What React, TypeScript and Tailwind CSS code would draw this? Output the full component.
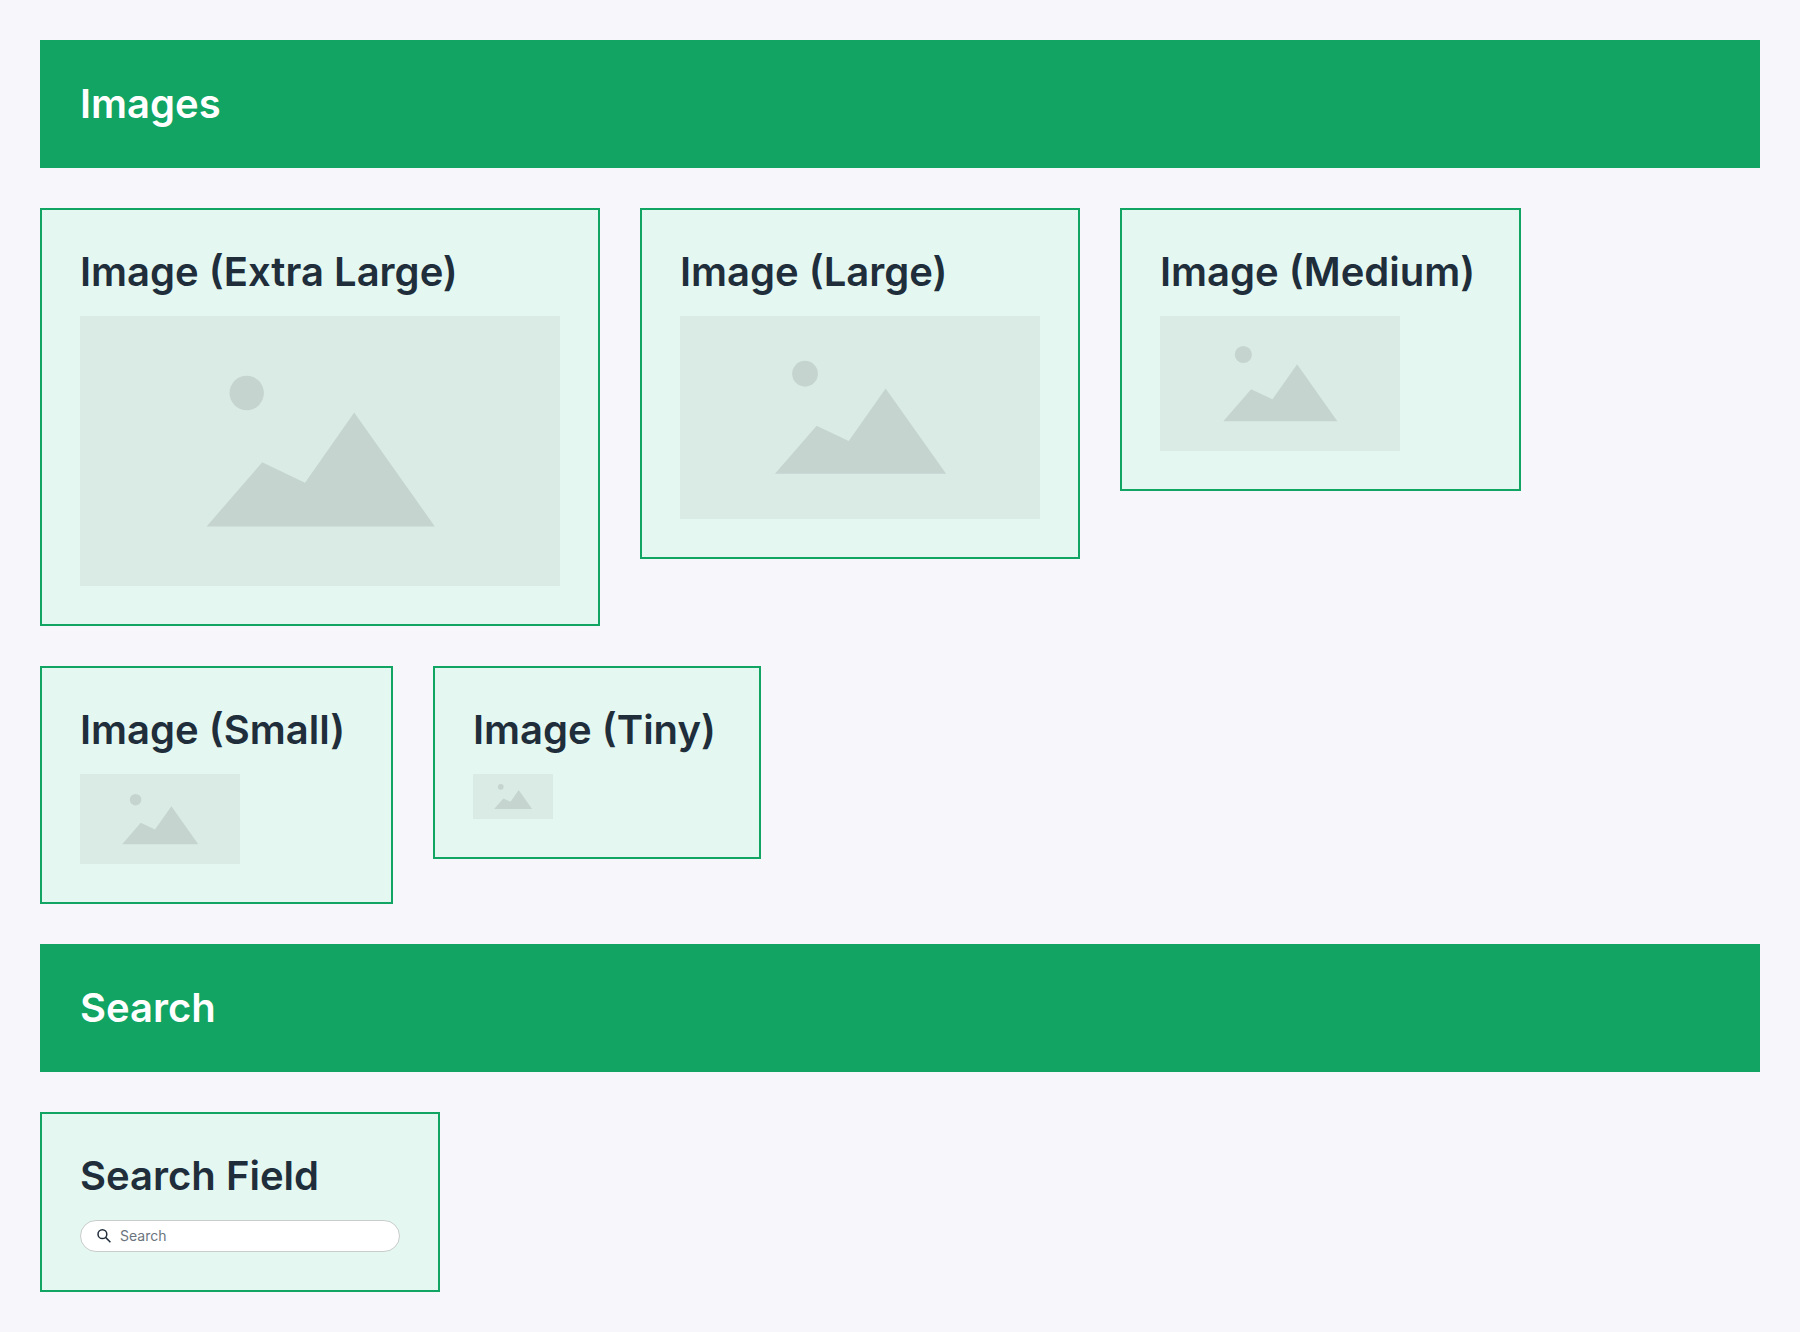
import type { ReactNode } from "react";

function Banner({ title }: { title: string }) {
  return (
    <header className="bg-[#11a462] p-10 text-white">
      <h2 className="text-[40px] leading-12 font-semibold">{title}</h2>
    </header>
  );
}

function Card({ title, width = "", children }: { title: string; width?: string; children: ReactNode }) {
  return (
    <article className={`flex flex-col gap-5 border-2 border-[#11a462] bg-[#e4f8f1] p-[38px] text-[#202d3a] ${width}`}>
      <h3 className="text-[40px] leading-12 font-semibold whitespace-nowrap">{title}</h3>
      {children}
    </article>
  );
}

function Placeholder({ width, label }: { width: string; label: string }) {
  return (
    <svg viewBox="0 0 480 270" role="img" aria-label={label} className={`block aspect-video bg-[#daebe5] ${width}`}>
      <g fill="#c5d4cf">
        <circle cx="166.7" cy="77" r="17.2" />
        <path d="M126.6 210.4 182.2 146.3 225 166.7 274.2 96.6 354.8 210.4Z" />
      </g>
    </svg>
  );
}

function SearchField() {
  return (
    <label className="flex h-8 w-80 items-center gap-2 rounded-full border border-[#c8cccb] bg-white px-[15px]">
      <svg viewBox="0 0 16 16" className="size-4 shrink-0" fill="none" stroke="#202d3a" strokeWidth="1.5" aria-hidden="true">
        <circle cx="6.4" cy="6.2" r="4.4" />
        <path d="M9.6 9.4 14.4 14.2" />
      </svg>
      <input
        type="search"
        aria-label="Search"
        placeholder="Search"
        className="min-w-0 flex-1 bg-transparent text-sm text-[#202d3a] outline-none placeholder:text-[#6b747e]"
      />
    </label>
  );
}

export default function App() {
  return (
    <main className="flex min-h-screen flex-col gap-10 bg-[#f6f6fb] p-10 font-['Inter',sans-serif]">
      <Banner title="Images" />
      <section className="flex flex-wrap items-start gap-10">
        <Card title="Image (Extra Large)">
          <Placeholder width="w-[480px]" label="Extra large placeholder" />
        </Card>
        <Card title="Image (Large)">
          <Placeholder width="w-[360px]" label="Large placeholder" />
        </Card>
        <Card title="Image (Medium)" width="w-[401px]">
          <Placeholder width="w-60" label="Medium placeholder" />
        </Card>
        <Card title="Image (Small)" width="w-[353px]">
          <Placeholder width="w-40" label="Small placeholder" />
        </Card>
        <Card title="Image (Tiny)" width="w-[328px]">
          <Placeholder width="w-20" label="Tiny placeholder" />
        </Card>
      </section>
      <Banner title="Search" />
      <section className="flex flex-wrap items-start gap-10">
        <Card title="Search Field">
          <SearchField />
        </Card>
      </section>
    </main>
  );
}
